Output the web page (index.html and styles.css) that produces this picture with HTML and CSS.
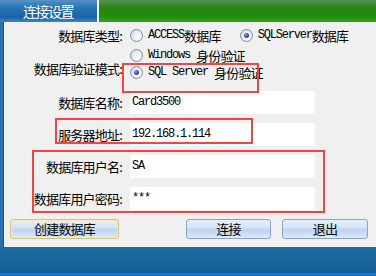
FILE: index.html
```html
<!DOCTYPE html>
<html lang="zh-CN">
<head>
    <meta charset="UTF-8">
    <title>连接设置</title>
    <link rel="stylesheet" href="styles.css">
</head>
<body>
    <div class="titlebar">
        <div class="tab">连接设置</div>
        <div class="sep"></div>
        <div class="green"></div>
    </div>
    <div class="main">
        <div class="strip"></div>
        <div class="panel">
            <div class="row r1">
                <div class="label">数据库类型:</div>
                <div class="opts">
                    <div class="opt"><span class="radio"></span><span class="en">ACCESS</span>数据库</div>
                    <div class="opt"><span class="radio checked"></span><span class="en">SQLServer</span>数据库</div>
                </div>
            </div>
            <div class="row r2">
                <div class="label"></div>
                <div class="opt"><span class="radio"></span><span class="en">Windows </span>身份验证</div>
            </div>
            <div class="row r3">
                <div class="label up">数据库验证模式:</div>
                <div class="opt"><span class="radio checked"></span><span class="en">SQL Server </span>身份验证</div>
            </div>
            <div class="row field">
                <div class="label">数据库名称:</div>
                <div class="input en">Card3500</div>
            </div>
            <div class="row field">
                <div class="label">服务器地址:</div>
                <div class="input en">192.168.1.114</div>
            </div>
            <div class="row field">
                <div class="label">数据库用户名:</div>
                <div class="input en">SA</div>
            </div>
            <div class="row field">
                <div class="label">数据库用户密码:</div>
                <div class="input en">***</div>
            </div>
            <div class="buttons">
                <div class="btn focus">创建数据库</div>
                <div class="btn push">连接</div>
                <div class="btn">退出</div>
            </div>

            <div class="mark m1"></div>
            <div class="mark m2"></div>
            <div class="mark m3"></div>
        </div>
    </div>
    <div class="footer"></div>
</body>
</html>
```

FILE: styles.css
```css
body {
    margin: 0;
    width: 376px;
    height: 276px;
    overflow: hidden;
    font-family: "Noto Sans CJK SC", sans-serif;
    font-size: 13px;
    letter-spacing: -0.8px;
    color: #000;
    background: #1b6aa5;
}
.titlebar {
    display: flex;
    height: 22px;
}
.tab {
    width: 97px;
    box-sizing: border-box;
    padding-left: 23px;
    color: #fff;
    font-size: 14px;
    letter-spacing: -1.5px;
    line-height: 22px;
    background: linear-gradient(#5b93c4 0, #3a80bd 4px, #2371b2 10px, #1a64a6 17px, #2a78b8 20px, #3c86c2 22px);
}
.sep {
    width: 2px;
    background: #f2f6f8;
}
.green {
    flex: 1;
    background: linear-gradient(#5a8f5a 0, #3f8a3a 3px, #23840f 9px, #1f8a0c 15px, #2b9a14 20px, #35a21c 22px);
}
.main {
    display: flex;
    height: 225px;
}
.strip {
    width: 3px;
    background: #2a72ad;
    border-right: 1px solid #15578f;
}
.panel {
    flex: 1;
    position: relative;
    background: #f0f0f0;
}
.row {
    display: flex;
    align-items: center;
}
.label {
    width: 118px;
    margin-right: 8px;
    text-align: right;
    white-space: nowrap;
    flex: none;
}
.label.up {
    margin-bottom: 8px;
}
.r1 {
    margin-top: 4px;
    height: 18px;
}
.r2 {
    margin-top: 2px;
    height: 18px;
}
.r3 {
    height: 16px;
}
.field {
    margin-top: 9px;
    height: 23px;
}
.r3 + .field {
    margin-top: 11px;
}
.opts {
    display: flex;
    gap: 19px;
}
.opt {
    display: flex;
    align-items: center;
    white-space: nowrap;
}
.en {
    font-family: "Liberation Mono", monospace;
    font-size: 12px;
    letter-spacing: -1.2px;
    white-space: pre;
}
.radio {
    width: 13px;
    height: 13px;
    box-sizing: border-box;
    margin-right: 5px;
    border: 1px solid #7b8da6;
    border-radius: 50%;
    background: radial-gradient(circle at 65% 65%, #ffffff 0, #eef0f3 40%, #cfd5dd 100%);
    display: flex;
    align-items: center;
    justify-content: center;
}
.radio.checked::after {
    content: "";
    width: 5px;
    height: 5px;
    border-radius: 50%;
    background: radial-gradient(circle at 35% 35%, #8fa0f0 0, #3346c0 50%, #1b2690 100%);
}
.input {
    width: 185px;
    height: 23px;
    box-sizing: border-box;
    padding-left: 2px;
    background: #fff;
    line-height: 23px;
}
.buttons {
    display: flex;
    margin-top: 9px;
    padding: 0 8px 0 6px;
}
.btn {
    height: 20px;
    box-sizing: border-box;
    border: 1px solid #8aa4c8;
    border-radius: 3px;
    background: linear-gradient(#e6effb 0, #d6e4f7 40%, #bdd3ef 55%, #cfe0f5 80%, #dde9f9 100%);
    text-align: center;
    line-height: 18px;
    width: 86px;
}
.btn.focus {
    width: 109px;
    border-color: #d8c470;
    box-shadow: inset 0 0 0 1px #f6ebb0;
}
.btn.push {
    margin-left: auto;
    margin-right: 11px;
    width: 85px;
}
.mark {
    position: absolute;
    box-sizing: border-box;
    border: 2px solid #f24444;
}
.m1 {
    left: 118px;
    top: 41px;
    width: 137px;
    height: 30px;
}
.m2 {
    left: 51px;
    top: 96px;
    width: 198px;
    height: 26px;
}
.m3 {
    left: 28px;
    top: 128px;
    width: 293px;
    height: 63px;
}
.footer {
    height: 26px;
    background: linear-gradient(#1b6ba1, #175f96);
    border-bottom: 3px solid #0c78d4;
}
```
